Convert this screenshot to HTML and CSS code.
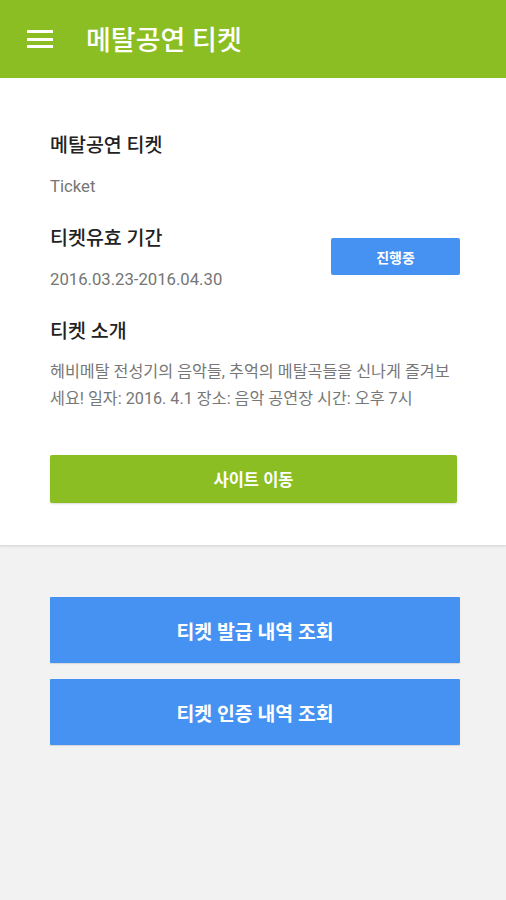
FILE: index.html
```html
<!DOCTYPE html>
<html lang="ko">

<head>
    <meta charset="utf-8">
    <title>메탈공연 티켓</title>
    <link rel="stylesheet" href="styles.css">
</head>

<body>
    <!-- top app bar -->
    <header class="appbar">
        <div class="menu-icon">
            <span></span>
            <span></span>
            <span></span>
        </div>
        <h1 class="appbar-title">메탈공연 티켓</h1>
    </header>

    <!-- ticket detail card -->
    <section class="card">
        <div class="field">
            <div class="label">메탈공연 티켓</div>
            <div class="value">Ticket</div>
        </div>
        <div class="field period">
            <div>
                <div class="label">티켓유효 기간</div>
                <div class="value">2016.03.23-2016.04.30</div>
            </div>
            <button class="status-btn">진행중</button>
        </div>
        <div class="field">
            <div class="label">티켓 소개</div>
            <p class="desc">헤비메탈 전성기의 음악들, 추억의 메탈곡들을 신나게 즐겨보세요! 일자: 2016. 4.1 장소: 음악 공연장 시간: 오후 7시</p>
        </div>
        <button class="site-btn">사이트 이동</button>
    </section>

    <!-- history buttons -->
    <div class="actions">
        <button class="big-btn">티켓 발급 내역 조회</button>
        <button class="big-btn">티켓 인증 내역 조회</button>
    </div>
</body>

</html>
```

FILE: styles.css
```css
body {
    margin: 0;
    padding: 0;
    width: 506px;
    height: 900px;
    background-color: #f2f2f2;
    font-family: Roboto, "Noto Sans CJK KR", sans-serif;
    overflow: hidden;
}

/* app bar */
.appbar {
    height: 78px;
    background-color: #8bbe23;
    display: flex;
    align-items: center;
    padding-left: 27px;
    box-sizing: border-box;
}

.menu-icon {
    width: 26px;
    display: flex;
    flex-direction: column;
    gap: 4.5px;
}

.menu-icon span {
    display: block;
    height: 3px;
    background-color: #fff;
}

.appbar-title {
    margin: 3px 0 0 33px;
    color: #fff;
    font-size: 27px;
    font-weight: 500;
    line-height: 32px;
}

/* card */
.card {
    background-color: #fff;
    padding: 56px 46px 42px 50px;
    border-bottom: 1px solid #dcdcdc;
    box-shadow: 0 1px 2px rgba(0, 0, 0, 0.08);
}

.field + .field {
    margin-top: 30px;
}

.label {
    font-size: 19.5px;
    line-height: 24px;
    font-weight: 500;
    color: #222;
}

.value {
    margin-top: 19px;
    font-size: 16.7px;
    line-height: 20px;
    color: #757575;
}

.period {
    display: flex;
    align-items: center;
    justify-content: space-between;
}

.status-btn {
    width: 129px;
    height: 37px;
    margin-top: -4px;
    border: none;
    border-radius: 2px;
    background-color: #4592f2;
    color: #fff;
    font-family: Roboto, "Noto Sans CJK KR", sans-serif;
    font-size: 14px;
    font-weight: 700;
}

.desc {
    margin: 14px 0 0;
    font-size: 16.2px;
    line-height: 27px;
    color: #777;
}

.site-btn {
    display: block;
    width: 407px;
    height: 48px;
    margin-top: 43px;
    border: none;
    border-radius: 2px;
    background-color: #8bbe23;
    box-shadow: 0 1px 2px rgba(0, 0, 0, 0.15);
    color: #fff;
    font-family: Roboto, "Noto Sans CJK KR", sans-serif;
    font-size: 16.5px;
    font-weight: 700;
}

/* bottom buttons */
.actions {
    padding: 51px 46px 0 50px;
    display: flex;
    flex-direction: column;
    gap: 16px;
}

.big-btn {
    height: 66px;
    border: none;
    border-radius: 1px;
    background-color: #4592f2;
    box-shadow: 0 1px 1px rgba(0, 0, 0, 0.12);
    color: #fff;
    font-family: Roboto, "Noto Sans CJK KR", sans-serif;
    font-size: 19.4px;
    font-weight: 700;
}
```
